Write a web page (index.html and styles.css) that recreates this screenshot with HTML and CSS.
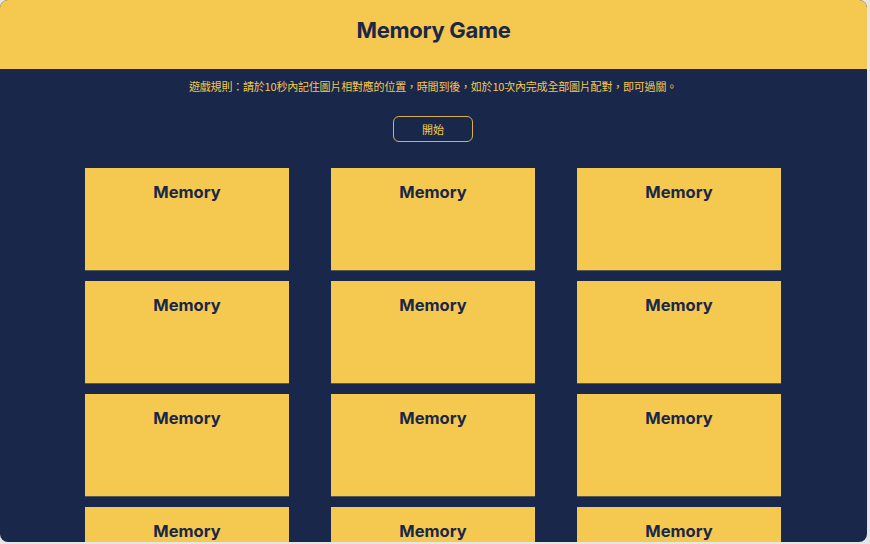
FILE: index.html
```html
<!DOCTYPE html>
<html lang="zh-Hant">
<head>
<meta charset="utf-8">
<title>Memory Game</title>
<link rel="stylesheet" href="styles.css">
</head>
<body>
<div class="app">
  <header class="header">
    <h1 class="title">Memory Game</h1>
  </header>
  <main class="main">
    <p class="rules">遊戲規則：請於10秒內記住圖片相對應的位置，時間到後，如於10次內完成全部圖片配對，即可過關。</p>
    <button class="start">開始</button>
    <div class="grid">
      <div class="card">Memory</div>
      <div class="card">Memory</div>
      <div class="card">Memory</div>
      <div class="card">Memory</div>
      <div class="card">Memory</div>
      <div class="card">Memory</div>
      <div class="card">Memory</div>
      <div class="card">Memory</div>
      <div class="card">Memory</div>
      <div class="card">Memory</div>
      <div class="card">Memory</div>
      <div class="card">Memory</div>
    </div>
  </main>
</div>
</body>
</html>
```

FILE: styles.css
```css
html, body {
  margin: 0;
  padding: 0;
  height: 100%;
  background: #e6e6e6;
  overflow: hidden;
}
.app {
  width: 867px;
  height: 542px;
  border-radius: 8px;
  overflow: hidden;
  background: #19284a;
  font-family: Inter, "Noto Sans CJK TC", sans-serif;
}
.header {
  background: #f5c84f;
  height: 69px;
  display: flex;
  align-items: center;
  justify-content: center;
}
.title {
  margin: 0 0 9px;
  font-size: 22px;
  font-weight: 700;
  color: #1a2748;
  letter-spacing: -0.3px;
}
.main {
  display: flex;
  flex-direction: column;
  align-items: center;
  padding-right: 1px;
}
.rules {
  margin: 8px 0 0;
  font-family: "Noto Sans CJK TC", sans-serif;
  font-size: 11px;
  line-height: 18px;
  letter-spacing: -0.2px;
  color: #f5c84f;
}
.start {
  margin-top: 21px;
  width: 80px;
  height: 26px;
  border: 1px solid #d9b14a;
  border-radius: 6px;
  background: transparent;
  color: #f5c84f;
  font-family: "Noto Sans CJK TC", sans-serif;
  font-size: 11px;
  padding: 0;
}
.grid {
  margin-top: 26px;
  display: grid;
  grid-template-columns: repeat(3, 204px);
  column-gap: 42px;
  row-gap: 11px;
}
.card {
  height: 102px;
  background: #f5c84f;
  box-shadow: 0 1px 0 #5a5a55;
  text-align: center;
  padding-top: 13px;
  box-sizing: border-box;
  font-size: 16.5px;
  font-weight: 700;
  color: #1a2748;
  line-height: 22px;
}
```
